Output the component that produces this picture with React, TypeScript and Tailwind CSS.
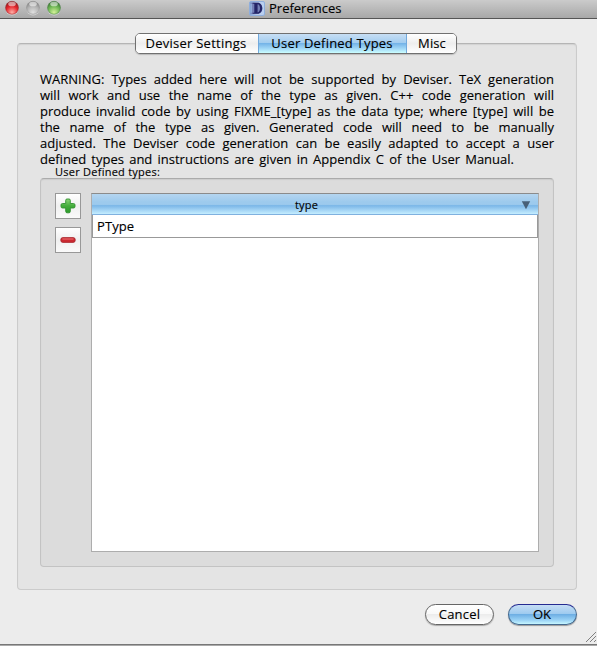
import React from 'react';

const warningLines = [
  'WARNING: Types added here will not be supported by Deviser. TeX generation',
  'will work and use the name of the type as given. C++ code generation will',
  'produce invalid code by using FIXME_[type] as the data type; where [type] will be',
  'the name of the type as given. Generated code will need to be manually',
  'adjusted. The Deviser code generation can be easily adapted to accept a user',
];

function Light({ tone }: { tone: 'red' | 'gray' | 'green' }) {
  const colors = {
    red: ['#ffb0a8', '#e5252b', '#8e1c20'],
    gray: ['#e0e0e0', '#b4b4b4', '#868686'],
    green: ['#d5f29a', '#6db653', '#3c7436'],
  }[tone];
  return (
    <svg width="14" height="16" viewBox="0 0 14 16">
      <defs>
        <radialGradient id={tone} cx="50%" cy="85%" r="80%">
          <stop offset="0" stopColor={colors[0]} />
          <stop offset="0.6" stopColor={colors[1]} />
          <stop offset="1" stopColor={colors[2]} />
        </radialGradient>
      </defs>
      <circle cx="7" cy="8.8" r="6.6" fill="#d8d8d8" />
      <circle cx="7" cy="7.8" r="6.5" fill={`url(#${tone})`} stroke={colors[2]} strokeOpacity="0.6" strokeWidth="0.8" />
      <ellipse cx="7" cy="4" rx="3.8" ry="2.3" fill="#fff" opacity="0.55" />
    </svg>
  );
}

function TitleBar() {
  return (
    <header className="flex h-[19px] border-b border-[#555] bg-linear-to-b from-[#cbcbcb] to-[#a8a8a8]">
      <div className="flex w-[249px] gap-[7px] pl-[5px]">
        <Light tone="red" />
        <Light tone="gray" />
        <Light tone="green" />
      </div>
      <svg className="mt-px shrink-0" width="16" height="15" viewBox="0 0 16 15">
        <defs>
          <linearGradient id="app" x1="0" x2="1">
            <stop offset="0" stopColor="#7f9fd2" />
            <stop offset="0.5" stopColor="#b9cbea" />
            <stop offset="1" stopColor="#b9d0f2" />
          </linearGradient>
        </defs>
        <rect x="0.5" y="0.5" width="15" height="14" rx="1.5" fill="url(#app)" stroke="#8faedc" />
        <path d="M1.5 1.8H8C15.2 1.8 15.2 12.8 8 12.8H1.5V11.8H3V2.8H1.5Z" fill="#7480b6" />
        <path d="M3.5 1.8H8.5C14.8 1.8 14.8 12.8 8.5 12.8H3.5V11.8H5.3V2.8H3.5ZM8.6 3.2V11.4C11.8 11.4 11.8 3.2 8.6 3.2Z" fill="#242568" fillRule="evenodd" />
      </svg>
      <h1 className="ml-[4px] w-[72px] whitespace-nowrap text-[13px] leading-[17px]">Preferences</h1>
    </header>
  );
}

function Tabs() {
  return (
    <nav className="relative z-10 mx-auto flex h-[21px] w-[322px] overflow-hidden rounded-[5px] border border-[#707070] text-center text-[13px] leading-[19px] shadow-[0_1px_1px_#bbb]">
      <button className="w-[122px] bg-linear-to-b from-white via-[#eeeeee] to-white pr-[2px] tracking-[0.25px]">Deviser Settings</button>
      <button className="-mt-px h-[20px] w-[149px] border-x border-t border-x-[#72a9dc] border-t-[#30368a] bg-[linear-gradient(#c7def4_0%,#a1ccef_48%,#75b4e8_50%,#a7dcf8_80%,#cbffff_100%)] pr-px leading-[19px] tracking-[0.2px]">User Defined Types</button>
      <button className="w-[49px] bg-linear-to-b from-white via-[#eeeeee] to-white pl-px tracking-[0.1px]">Misc</button>
    </nav>
  );
}

function ToolButton({ children }: { children: React.ReactNode }) {
  return (
    <button className="flex size-[26px] items-center justify-center border border-[#989898] bg-linear-to-b from-white via-[#f0f0f0] to-[#fafafa]">
      {children}
    </button>
  );
}

function TypeTable() {
  return (
    <div className="h-[359px] w-[448px] border border-[#adadad] border-t-[#8b8b8b] bg-white">
      <div className="flex h-[21px] border-b border-[#80b1df] bg-[linear-gradient(#b4d5f0_0%,#9dcaed_40%,#9dcaed_52%,#7bb7e8_58%,#a3d3f4_80%,#c4edff_100%)] text-[11px] leading-[21px]">
        <span className="w-[429px] text-center tracking-[0.2px]">type</span>
        <svg className="mt-[7px]" width="10" height="9" viewBox="0 0 10 9">
          <path d="M0.8 0.3H9.2L5 8.2Z" fill="#486078" />
        </svg>
      </div>
      <div className="h-[23px] border-x border-b border-[#999] pl-1 text-[13px] leading-[23px] tracking-[0.1px]">PType</div>
    </div>
  );
}

export default function App() {
  return (
    <main className="h-[646px] w-[597px] overflow-hidden bg-[#ececec] font-['Open_Sans','Noto_Sans',sans-serif] text-black [-webkit-text-stroke:0.12px_black]">
      <TitleBar />
      <div className="flex h-[625px] flex-col pt-[14px]">
        <div className="pr-[5px]"><Tabs /></div>
        <section className="-mt-[11px] ml-[17px] h-[547px] w-[560px] rounded-[4px] border border-[#cbcbcb] border-t-[#b5b5b5] bg-[#e4e4e4] px-[22px] pt-[27px] shadow-[inset_0_1px_1px_#d2d2d2]">
          <div className="h-[96px] w-[514px] text-[13px] leading-4">
            {warningLines.map((line) => (
              <p key={line} className="h-4 whitespace-nowrap [text-align-last:justify]">{line}</p>
            ))}
            <p className="h-4 w-[474px] whitespace-nowrap [text-align-last:justify]">defined types and instructions are given in Appendix C of the User Manual.</p>
          </div>
          <h2 className="h-[11px] pl-[15px] text-[11px] leading-[9px] tracking-[0.25px]">User Defined types:</h2>
          <div className="flex h-[389px] w-[514px] gap-[10px] rounded-[4px] border border-[#c3c3c3] border-t-[#ababab] bg-[#dcdcdc] pl-[14px] pt-[14px] shadow-[inset_0_1px_1px_#ccc]">
            <div className="flex flex-col gap-[8px]">
              <ToolButton>
                <svg width="16" height="16" viewBox="0 0 16 16">
                  <defs>
                    <linearGradient id="plus" x2="0" y2="1">
                      <stop offset="0" stopColor="#8ed67a" />
                      <stop offset="0.5" stopColor="#44ad3c" />
                      <stop offset="1" stopColor="#2d9a2a" />
                    </linearGradient>
                  </defs>
                  <path d="M7 1H9Q10.3 1 10.3 2.3V5.5H13.5Q15 5.5 15 7V8.5Q15 10 13.5 10H10.3V13.3Q10.3 14.8 9 14.8H7Q5.7 14.8 5.7 13.3V10H2.5Q1 10 1 8.5V7Q1 5.5 2.5 5.5H5.7V2.3Q5.7 1 7 1Z" fill="url(#plus)" stroke="#319130" strokeWidth="0.9" />
                </svg>
              </ToolButton>
              <ToolButton>
                <svg width="16" height="16" viewBox="0 0 16 16">
                  <rect x="0.8" y="5.6" width="14.4" height="4.8" rx="2" fill="#cc2931" stroke="#a6262c" strokeWidth="0.8" />
                  <path d="M2.4 7H13.5" stroke="#ed7575" />
                </svg>
              </ToolButton>
            </div>
            <TypeTable />
          </div>
        </section>
        <footer className="mt-[14px] flex justify-end gap-[14px] pr-5 text-[13px] leading-[19px]">
          <button className="h-[21px] w-[69px] rounded-full border border-[#666] bg-[linear-gradient(#fff_0%,#f9f9f9_45%,#ececec_50%,#fff_100%)] shadow-[0_1px_1px_#aaa] tracking-[0.2px]">Cancel</button>
          <button className="h-[21px] w-[69px] rounded-full border border-[#44698f] border-t-[#252b91] bg-[linear-gradient(#c5ddf5_0%,#9ccaef_48%,#6eafe4_50%,#9bd3f6_80%,#c6f6ff_100%)] shadow-[0_1px_1px_#999] pr-px">OK</button>
        </footer>
        <svg className="-mr-px ml-auto mt-auto mb-px shrink-0" width="13" height="12" viewBox="0 0 13 12">
          <path d="M1 11L11 1M5 11L11 5M9 11L11 9" stroke="#808080" fill="none" />
        </svg>
      </div>
      <div className="h-[2px] border-t border-[#777] bg-[#aaa]" />
    </main>
  );
}
